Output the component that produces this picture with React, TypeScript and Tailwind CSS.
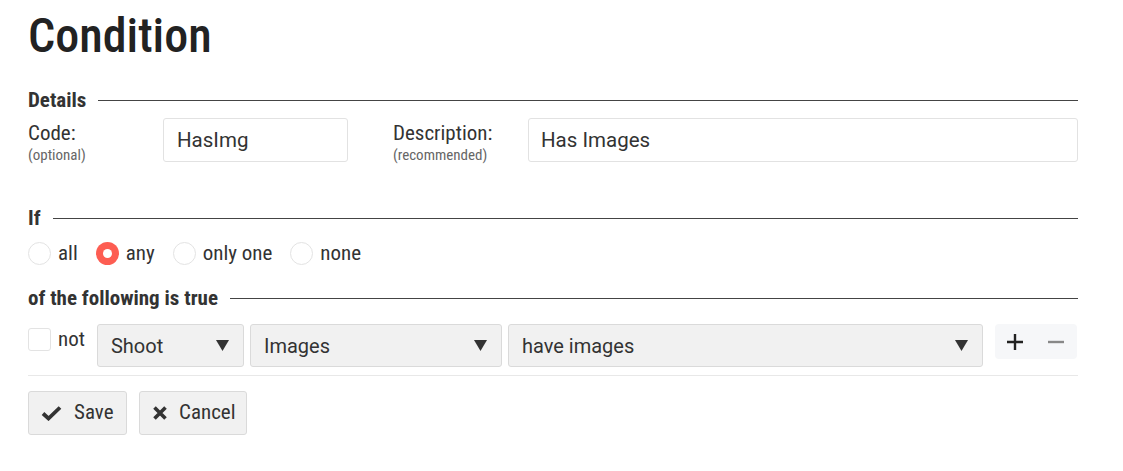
import React from "react";

const cond = "font-['Roboto_Condensed','Roboto',sans-serif] [font-stretch:condensed]";

function SectionHeading({ title }: { title: string }) {
  return (
    <div className="flex h-[24px] items-center gap-[12px]">
      <span className={`${cond} text-[21px] leading-[24px] font-bold text-[#333]`}>{title}</span>
      <div className="h-px flex-1 bg-[#444]" />
    </div>
  );
}

function Radio({ label, checked }: { label: string; checked?: boolean }) {
  return (
    <label className="flex items-center gap-[7px]">
      {checked ? (
        <span className="flex h-[23px] w-[23px] items-center justify-center rounded-full bg-[#fd5d52]">
          <span className="h-[9px] w-[9px] rounded-full bg-white" />
        </span>
      ) : (
        <span className="h-[23px] w-[23px] rounded-full border border-[#e3e3e3] bg-white" />
      )}
      <span className={`${cond} text-[21px] leading-[24px] text-[#333]`}>{label}</span>
    </label>
  );
}

function Select({ value, className }: { value: string; className: string }) {
  return (
    <div
      className={`flex h-[43px] items-center justify-between rounded-[3px] border border-[#dadada] bg-[#f1f1f1] pl-[13px] pr-[14px] ${className}`}
    >
      <span className="font-['Roboto',sans-serif] text-[20px] text-[#333]">{value}</span>
      <svg width="13" height="11" viewBox="0 0 13 11">
        <path d="M0 0 H13 L6.5 11 Z" fill="#333" />
      </svg>
    </div>
  );
}

export default function App() {
  return (
    <div className="w-[1078px] bg-white pl-[28px] pt-[12px] text-[#333]">
      <h1 className={`${cond} h-[48px] text-[48px] leading-[48px] font-medium text-[#222]`}>Condition</h1>

      <div className="mt-[28px]">
        <SectionHeading title="Details" />
      </div>

      <div className="mt-[6px] flex h-[44px] items-start">
        <div className="w-[135px] pt-[3px]">
          <div className={`${cond} text-[21px] leading-[24px]`}>Code:</div>
          <div className={`${cond} mt-[2px] text-[15px] leading-[17px] text-[#666]`}>(optional)</div>
        </div>
        <div className="flex h-[44px] w-[185px] items-center rounded-[3px] border border-[#e2e2e2] px-[13px] font-['Roboto',sans-serif] text-[20.5px] text-[#333]">
          HasImg
        </div>
        <div className="ml-[45px] w-[135px] pt-[3px]">
          <div className={`${cond} text-[21px] leading-[24px]`}>Description:</div>
          <div className={`${cond} mt-[2px] text-[15px] leading-[17px] text-[#666]`}>(recommended)</div>
        </div>
        <div className="flex h-[44px] flex-1 items-center rounded-[3px] border border-[#e2e2e2] px-[12px] font-['Roboto',sans-serif] text-[20.5px] text-[#333]">
          Has Images
        </div>
      </div>

      <div className="mt-[44px]">
        <SectionHeading title="If" />
      </div>

      <div className="mt-[11px] flex h-[24px] items-center gap-[18px]">
        <Radio label="all" />
        <Radio label="any" checked />
        <Radio label="only one" />
        <Radio label="none" />
      </div>

      <div className="mt-[21px]">
        <SectionHeading title="of the following is true" />
      </div>

      <div className="mt-[14px] flex h-[43px] items-start">
        <div className="flex items-start gap-[7px] pt-[4px]">
          <span className="h-[23px] w-[23px] rounded-[3px] border border-[#e3e3e3] bg-white" />
          <span className={`${cond} text-[21px] leading-[22px]`}>not</span>
        </div>
        <Select value="Shoot" className="ml-[12px] w-[147px]" />
        <Select value="Images" className="ml-[6px] w-[252px]" />
        <Select value="have images" className="ml-[6px] w-[475px]" />
        <div className="ml-[12px] flex">
          <button className="flex h-[35px] w-[41px] items-center justify-center rounded-l-[4px] bg-[#f6f7f9]">
            <svg width="18" height="18" viewBox="0 0 18 18">
              <path d="M9 1 V17 M1 9 H17" stroke="#222" strokeWidth="2.4" />
            </svg>
          </button>
          <button className="flex h-[35px] w-[41px] items-center justify-center rounded-r-[4px] bg-[#f6f7f9]">
            <svg width="18" height="18" viewBox="0 0 18 18">
              <path d="M1 9 H17" stroke="#888" strokeWidth="2.4" />
            </svg>
          </button>
        </div>
      </div>

      <div className="mt-[8px] h-px bg-[#e8e8e8]" />

      <div className="mt-[15px] flex gap-[12px] pb-[37px]">
        <button className="flex h-[44px] w-[99px] items-center gap-[12px] rounded-[3px] border border-[#dadada] bg-[#f1f1f1] pl-[12px]">
          <svg width="21" height="16" viewBox="0 0 21 16">
            <path d="M2 8.5 L7.5 13.5 L19 2.5" stroke="#333" strokeWidth="3.8" fill="none" />
          </svg>
          <span className={`${cond} text-[21px] text-[#333]`}>Save</span>
        </button>
        <button className="flex h-[44px] w-[108px] items-center gap-[11px] rounded-[3px] border border-[#dadada] bg-[#f1f1f1] pl-[12px]">
          <svg width="16" height="16" viewBox="0 0 16 16">
            <path d="M2.5 2.5 L13.5 13.5 M13.5 2.5 L2.5 13.5" stroke="#333" strokeWidth="3.6" />
          </svg>
          <span className={`${cond} text-[21px] text-[#333]`}>Cancel</span>
        </button>
      </div>
    </div>
  );
}
